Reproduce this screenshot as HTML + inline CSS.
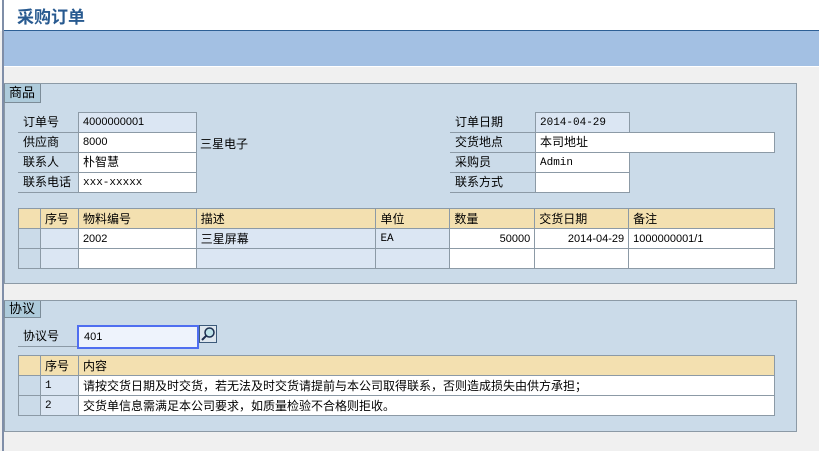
<!DOCTYPE html>
<html><head><meta charset="utf-8"><style>
*{margin:0;padding:0;box-sizing:border-box}
body{width:819px;height:451px;overflow:hidden;background:#f0f0f0;position:relative;font-family:"Liberation Sans","Noto Sans CJK SC",sans-serif;font-size:12px;color:#000}
.a{position:absolute}
.panel{position:absolute;left:4px;width:793px;background:#cbdbe9;border:1px solid #8c9aa6}
.tab{position:absolute;left:4px;width:37px;background:#aecbdb;border:1px solid #7c8c98;border-top:none;font-size:13px;padding-left:4px}
.lbl{position:absolute;height:20px;border-bottom:1px solid #8c9aa6;padding-left:5px;line-height:19px;font-size:12px}
.val{position:absolute;height:21px;background:#fff;border:1px solid #8c9aa6;padding-left:4px;line-height:19px;font-size:11px}
.mono{font-family:"Liberation Mono",monospace;font-size:11px;line-height:21px}
table{position:absolute;border-collapse:collapse}
td{border:1px solid #8c9aa6;height:20px;padding:0 4px;font-size:12px;line-height:18px;white-space:nowrap}
.h td{background:#f3e0b0}
.s{background:#cbdbe9}
.l{background:#dbe6f3}
.w{background:#fff}
</style></head><body>
<div class="a" style="left:0;top:0;width:819px;height:31px;background:#fff"></div>
<div class="a" style="left:17px;top:3px;font-size:17px;font-weight:bold;color:#285a90">采购订单</div>
<div class="a" style="left:4px;top:30px;width:815px;height:1px;background:#2d5f95"></div>
<div class="a" style="left:4px;top:31px;width:815px;height:35px;background:#a3c0e3"></div>
<div class="a" style="left:4px;top:66px;width:815px;height:1px;background:#fff"></div>
<div class="a" style="left:2px;top:0;width:2px;height:451px;background:#7f8ea8"></div>

<div class="panel" style="top:83px;height:201px"></div>
<div class="tab" style="top:84px;height:19px;line-height:18px">商品</div>

<div class="lbl" style="left:18px;top:113px;width:60px">订单号</div>
<div class="val" style="left:78px;top:112px;width:119px;background:#dbe6f3">4000000001</div>
<div class="lbl" style="left:18px;top:133px;width:60px">供应商</div>
<div class="val" style="left:78px;top:132px;width:119px">8000</div>
<div class="a" style="left:200px;top:135px;font-size:12px">三星电子</div>
<div class="lbl" style="left:18px;top:153px;width:60px">联系人</div>
<div class="val" style="left:78px;top:152px;width:119px;font-size:12px">朴智慧</div>
<div class="lbl" style="left:18px;top:173px;width:60px">联系电话</div>
<div class="val mono" style="left:78px;top:172px;width:119px">xxx-xxxxx</div>

<div class="lbl" style="left:450px;top:113px;width:85px">订单日期</div>
<div class="val mono" style="left:535px;top:112px;width:95px;background:#dbe6f3">2014-04-29</div>
<div class="lbl" style="left:450px;top:133px;width:85px">交货地点</div>
<div class="val" style="left:535px;top:132px;width:240px;font-size:12px">本司地址</div>
<div class="lbl" style="left:450px;top:153px;width:85px">采购员</div>
<div class="val mono" style="left:535px;top:152px;width:95px">Admin</div>
<div class="lbl" style="left:450px;top:173px;width:85px">联系方式</div>
<div class="val" style="left:535px;top:172px;width:95px"></div>

<table style="left:18px;top:208px;width:757px">
<colgroup><col style="width:22px"><col style="width:38px"><col style="width:118px"><col style="width:180px"><col style="width:74px"><col style="width:85px"><col style="width:94px"><col style="width:146px"></colgroup>
<tr class="h"><td class="s"></td><td>序号</td><td>物料编号</td><td>描述</td><td>单位</td><td>数量</td><td>交货日期</td><td>备注</td></tr>
<tr><td class="s"></td><td class="l"></td><td class="w" style="font-size:11px">2002</td><td class="l">三星屏幕</td><td class="l mono" style="line-height:18px">EA</td><td class="w" style="text-align:right;font-size:11px">50000</td><td class="w" style="text-align:right;font-size:11px">2014-04-29</td><td class="w" style="font-size:11px">1000000001/1</td></tr>
<tr><td class="s"></td><td class="l"></td><td class="w"></td><td class="l"></td><td class="l"></td><td class="w"></td><td class="w"></td><td class="w"></td></tr>
</table>

<div class="panel" style="top:300px;height:132px"></div>
<div class="tab" style="top:301px;height:17px;line-height:16px">协议</div>
<div class="lbl" style="left:18px;top:327px;width:60px">协议号</div>
<div class="a" style="left:77px;top:325px;width:122px;height:24px;border:2px solid #4f6ef0;background:#eef3fc;padding-left:5px;line-height:20px;font-size:11px">401</div>
<div class="a" style="left:199px;top:325px;width:18px;height:18px;background:#dde6ee;border:1px solid #3c5a7a">
<svg width="16" height="16" viewBox="0 0 16 16" style="position:absolute;left:0;top:0"><circle cx="9.5" cy="6.5" r="4.5" fill="#bfe3ea" stroke="#1d2f50" stroke-width="1.5"/><path d="M6.3 9.7L2 14" stroke="#1d2f50" stroke-width="2"/></svg></div>

<table style="left:18px;top:355px;width:757px">
<colgroup><col style="width:22px"><col style="width:38px"><col></colgroup>
<tr class="h"><td class="s"></td><td>序号</td><td>内容</td></tr>
<tr><td class="s"></td><td class="l mono" style="line-height:18px">1</td><td class="w">请按交货日期及时交货，若无法及时交货请提前与本公司取得联系，否则造成损失由供方承担；</td></tr>
<tr><td class="s"></td><td class="l mono" style="line-height:18px">2</td><td class="w">交货单信息需满足本公司要求，如质量检验不合格则拒收。</td></tr>
</table>
</body></html>
